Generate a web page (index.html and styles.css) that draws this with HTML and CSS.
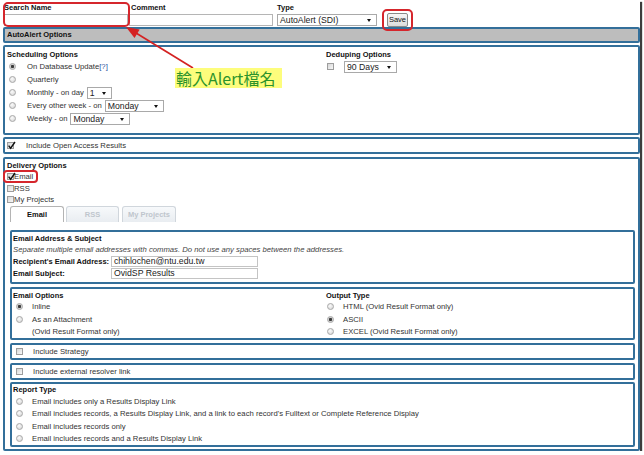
FILE: index.html
```html
<!DOCTYPE html>
<html lang="en">
<head>
<meta charset="utf-8">
<title>AutoAlert</title>
<link rel="stylesheet" href="styles.css">
</head>
<body>
<div class="page">
  <div class="topbar">
    <div class="field f-name">
      <div class="lbl">Search Name</div>
      <div class="textbox tb-name"></div>
    </div>
    <div class="field f-comment">
      <div class="lbl">Comment</div>
      <div class="textbox tb-comment"></div>
    </div>
    <div class="field f-type">
      <div class="lbl">Type</div>
      <div class="select sel-type">AutoAlert (SDI)<span class="arr"></span></div>
    </div>
    <div class="save">Save</div>
  </div>

  <div class="box header">AutoAlert Options</div>

  <div class="box sched">
    <div class="sched-left">
      <div class="title">Scheduling Options</div>
      <div class="srow"><span class="radio on"></span><span>On Database Update<span class="help">[?]</span></span></div>
      <div class="srow"><span class="radio"></span><span>Quarterly</span></div>
      <div class="srow"><span class="radio"></span><span>Monthly - on day</span><span class="select sel-day">1<span class="arr"></span></span></div>
      <div class="srow"><span class="radio"></span><span>Every other week - on</span><span class="select sel-week">Monday<span class="arr"></span></span></div>
      <div class="srow"><span class="radio"></span><span>Weekly - on</span><span class="select sel-week2">Monday<span class="arr"></span></span></div>
    </div>
    <div class="sched-right">
      <div class="title">Deduping Options</div>
      <div class="srow dedup"><span class="cb"></span><span class="select sel-days">90 Days<span class="arr"></span></span></div>
    </div>
  </div>

  <div class="box open"><span class="cb on"><svg viewBox="0 0 9 9"><path d="M1.6 4.6 L3.6 7.2 L8 1"/></svg></span><span>Include Open Access Results</span></div>

  <div class="box delivery">
    <div class="title">Delivery Options</div>
    <div class="drow"><span class="cb on"><svg viewBox="0 0 9 9"><path d="M1.6 4.6 L3.6 7.2 L8 1"/></svg></span><span>Email</span></div>
    <div class="drow"><span class="cb"></span><span>RSS</span></div>
    <div class="drow"><span class="cb"></span><span>My Projects</span></div>
    <div class="tabs">
      <div class="tab tab-email active">Email</div>
      <div class="tab tab-rss">RSS</div>
      <div class="tab tab-proj">My Projects</div>
    </div>
    <div class="panel">
      <div class="ibox addr">
        <div class="title">Email Address &amp; Subject</div>
        <div class="hint">Separate multiple email addresses with commas. Do not use any spaces between the addresses.</div>
        <div class="frow"><span class="flabel">Recipient's Email Address:</span><span class="textbox tb-mail">chihlochen@ntu.edu.tw</span></div>
        <div class="frow"><span class="flabel">Email Subject:</span><span class="textbox tb-mail">OvidSP Results</span></div>
      </div>
      <div class="ibox opts">
        <div class="ocol ocol-left">
          <div class="title">Email Options</div>
          <div class="orow"><span class="radio on"></span><span>Inline</span></div>
          <div class="orow"><span class="radio"></span><span>As an Attachment</span></div>
          <div class="orow cont">(Ovid Result Format only)</div>
        </div>
        <div class="ocol ocol-right">
          <div class="title">Output Type</div>
          <div class="orow"><span class="radio"></span><span>HTML (Ovid Result Format only)</span></div>
          <div class="orow"><span class="radio on"></span><span>ASCII</span></div>
          <div class="orow"><span class="radio"></span><span>EXCEL (Ovid Result Format only)</span></div>
        </div>
      </div>
      <div class="ibox single"><span class="cb"></span><span>Include Strategy</span></div>
      <div class="ibox single last-single"><span class="cb"></span><span>Include external resolver link</span></div>
      <div class="ibox report">
        <div class="title">Report Type</div>
        <div class="orow"><span class="radio"></span><span>Email includes only a Results Display Link</span></div>
        <div class="orow"><span class="radio"></span><span>Email includes records, a Results Display Link, and a link to each record's Fulltext or Complete Reference Display</span></div>
        <div class="orow"><span class="radio"></span><span>Email includes records only</span></div>
        <div class="orow"><span class="radio"></span><span>Email includes records and a Results Display Link</span></div>
      </div>
    </div>
  </div>

  <div class="mark mark-name"></div>
  <div class="mark mark-save"></div>
  <div class="mark mark-email"></div>
  <svg class="arrow" viewBox="0 0 640 100">
    <line x1="136" y1="33" x2="193" y2="68"/>
    <polygon points="126,27 134.5,38.1 139.7,29.5"/>
  </svg>
  <div class="note">輸入Alert檔名</div>
</div>
</body>
</html>
```

FILE: styles.css
```css
* { box-sizing: border-box; margin: 0; padding: 0; }
html, body { background: #fff; }
body {
  margin: 0;
  font-family: "Liberation Sans", Arial, sans-serif;
  font-size: 7.7px;
  line-height: 11px;
  color: #333;
}
.page {
  position: relative;
  width: 640px;
  height: 451px;
  background: #fff;
  box-shadow: 2px 2px 1px #3c3c3c;
}

/* top bar */
.topbar { display: flex; align-items: flex-start; height: 27px; padding: 3px 0 0 4px; }
.field { display: flex; flex-direction: column; }
.lbl { font-weight: bold; font-size: 7.5px; line-height: 10px; height: 10px; color: #111; }
.textbox {
  display: block; height: 12px; margin-top: 1px;
  border: 1px solid #b5b5b5; background: #fff;
  font-size: 8.7px; line-height: 10px; padding-left: 2px;
  color: #222; white-space: nowrap;
}
.tb-name { width: 124px; }
.f-comment { margin-left: 1px; }
.f-comment .lbl { padding-left: 2px; }
.tb-comment { width: 144px; }
.f-type { margin-left: 4px; }
.select {
  position: relative; display: inline-block; flex: none;
  height: 12px; border: 1px solid #a9a9a9; background: #fff;
  font-size: 8.7px; line-height: 10px; padding-left: 2px;
  color: #222; white-space: nowrap;
}
.select .arr {
  position: absolute; right: 5px; top: 4px; width: 0; height: 0;
  border-top: 3px solid #111; border-left: 2px solid transparent; border-right: 2px solid transparent;
}
.sel-type { width: 100px; margin-top: 1px; }
.save {
  margin: 10px 0 0 10px; width: 21px; height: 14px;
  border: 1px solid #8a8a8a; border-radius: 2px;
  background: linear-gradient(#f6f6f6, #dcdcdc);
  font-size: 7.5px; line-height: 12px; text-align: center; color: #111;
}

/* boxes */
.box { margin-left: 3px; border: 2px solid #336f9a; border-radius: 2px; }
.header {
  height: 16px; background: #bdbdbd; font-weight: bold; font-size: 7.5px; color: #111;
  line-height: 12px; padding-left: 2px; margin-bottom: 2px;
}
.title { font-weight: bold; font-size: 7.5px; line-height: 11px; height: 11px; color: #111; white-space: nowrap; }

.sched { display: flex; padding: 2px 0 8px 2px; margin-bottom: 2px; }
.sched-left { width: 319px; }
.srow { display: flex; align-items: center; height: 13px; white-space: nowrap; }
.sched-left .radio { margin: 0 11px 0 2px; }
.help { color: #1f4f9e; }
.sel-day { width: 25px; margin-left: 3px; }
.sel-week { width: 59px; margin-left: 3px; }
.sel-week2 { width: 60px; margin-left: 3px; }
.dedup .cb { margin: 0 10px 0 1px; }
.sel-days { width: 53px; margin-top: 1px; }

.open { display: flex; align-items: center; height: 17px; padding-left: 2px; margin-bottom: 3px; }
.open .cb { margin-right: 12px; }

.delivery { padding: 1px 0 2px 2px; }
.drow { display: flex; align-items: center; height: 11.5px; }
.drow .cb { margin-right: 0; }

.tabs { display: flex; height: 16px; margin-left: 3px; }
.tab {
  height: 16px; border: 1px solid #d0d6dc; border-bottom: none;
  border-radius: 3px 3px 0 0;
  background: linear-gradient(#f7f9fb, #e9edf1);
  color: #bfc6cd; font-weight: bold; font-size: 7.5px; text-align: center; line-height: 15px;
}
.tab-email { width: 54px; margin-right: 2px; }
.tab-rss { width: 53px; margin-right: 3px; }
.tab-proj { width: 54px; }
.tab.active { background: #fff; color: #111; border-color: #b4b4b4; }

.panel { margin: 8.5px 3px 0 3px; }
.ibox { border: 2px solid #336f9a; border-radius: 2px; padding-left: 1px; margin-bottom: 3px; }
.addr { padding-top: 1px; padding-bottom: 2px; }
.hint { font-style: italic; color: #444; line-height: 11px; height: 11px; white-space: nowrap; }
.frow { display: flex; align-items: center; height: 12.5px; }
.flabel { font-weight: bold; font-size: 7.5px; width: 98px; color: #111; white-space: nowrap; }
.tb-mail { width: 147px; height: 11px; margin-top: 0; border-color: #c4c4c4; line-height: 9px; }

.opts { display: flex; padding-top: 0.5px; }
.ocol-left { width: 313px; }
.orow { display: flex; align-items: center; height: 12.5px; white-space: nowrap; }
.ocol-left .radio, .report .radio { margin: 0 9px 0 3px; }
.ocol-right .radio { margin: 0 9px 0 1px; }
.cont { padding-left: 19px; }
.single { display: flex; align-items: center; height: 17px; }
.single .cb { margin: 0 10px 0 3px; }
.last-single { margin-bottom: 2px; }
.report { margin-bottom: 0; }

/* controls */
.radio {
  display: inline-block; flex: none; width: 7px; height: 7px; border-radius: 50%;
  border: 1px solid #a8a8a8;
  background: radial-gradient(circle at 40% 35%, #fbfbfb, #d2d2d2);
}
.radio.on { background: radial-gradient(circle, #3a3a3a 0 1.3px, #cdcdcd 1.9px, #ededed); }
.cb {
  position: relative; display: inline-block; flex: none; width: 7px; height: 7px;
  border: 1px solid #9d9d9d;
  background: linear-gradient(135deg, #d6d6d6, #f8f8f8);
}
.cb svg { position: absolute; left: -1px; top: -2px; width: 9px; height: 9px; overflow: visible; }
.cb svg path { fill: none; stroke: #111; stroke-width: 1.4; }

/* annotations */
.mark { position: absolute; border: 2px solid #d5262c; border-radius: 5px; }
.mark-name { left: 3px; top: 2px; width: 127px; height: 25px; }
.mark-save { left: 382px; top: 9px; width: 31px; height: 22px; }
.mark-email { left: 3px; top: 170px; width: 35px; height: 13px; border-radius: 4px; }
.arrow { position: absolute; left: 0; top: 0; width: 640px; height: 100px; }
.arrow line { stroke: #d42222; stroke-width: 1.7; }
.arrow polygon { fill: #d42222; }
.note {
  position: absolute; left: 175px; top: 68px; width: 107px; height: 20px;
  background: #fdfd7c; color: #2b932b;
  font-family: "Noto Sans CJK TC", "Liberation Sans", sans-serif;
  font-size: 16px; line-height: 20px; padding-left: 1px; white-space: nowrap;
}
```
